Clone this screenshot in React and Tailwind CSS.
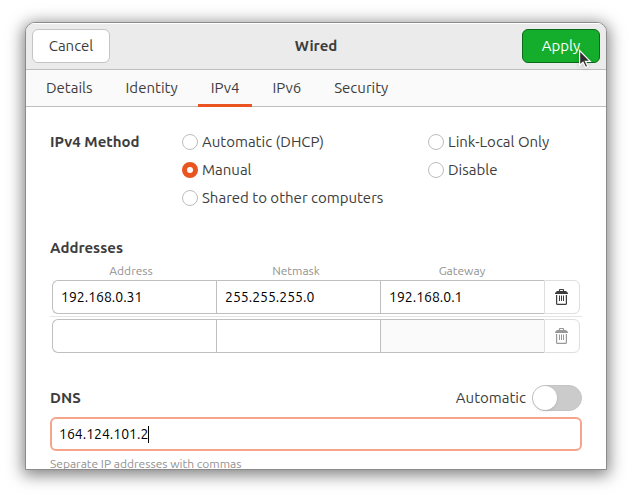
import React, { useState } from "react";

const tabs = ["Details", "Identity", "IPv4", "IPv6", "Security"];

const methods = [
  { id: "auto", label: "Automatic (DHCP)" },
  { id: "link-local", label: "Link-Local Only" },
  { id: "manual", label: "Manual" },
  { id: "disable", label: "Disable" },
  { id: "shared", label: "Shared to other computers" },
];

const emptyRow = { address: "", netmask: "", gateway: "" };

function TrashIcon() {
  return (
    <svg width="16" height="16" viewBox="0 0 16 16" fill="none" stroke="currentColor" aria-hidden="true">
      <path d="M5.5 2.5V1.2q0-.7.7-.7h2.6q.7 0 .7.7v1.3" strokeWidth="1.2" />
      <path d="M3 2h9l2 2v1H1V4z" fill="currentColor" stroke="none" />
      <path d="M2.6 6v8.4a1 1 0 0 0 1 1h7.8a1 1 0 0 0 1-1V6" strokeWidth="1.2" />
      <path d="M5.5 6.5V12M7.5 6.5V12M9.5 6.5V12" strokeWidth="1" />
    </svg>
  );
}

function Pointer() {
  return (
    <svg
      className="absolute left-14 top-5 pointer-events-none drop-shadow-sm"
      width="14"
      height="21"
      viewBox="0 0 14 21"
      aria-hidden="true"
    >
      <path
        d="M1.6 1.5v14.7l3.4-3 2.6 5.3 2.3-1.1-2.5-5.1h4.8z"
        fill="#2d2d2d"
        stroke="#fff"
        strokeWidth="1.2"
      />
    </svg>
  );
}

function AddressRow({ row, index, last, onChange, onRemove }) {
  const blank = !row.address && !row.netmask && !row.gateway;
  const field = "block w-full h-[34px] border-y border-l border-[#bfbfbf] px-2 text-sm text-black outline-none";
  const cell = last ? "pt-0.5" : "pb-0.5 border-b border-[#e4e4e4]";

  return (
    <tr>
      <td className={`${cell} pl-0.5`}>
        <input
          aria-label={`Address ${index + 1}`}
          value={row.address}
          onChange={(e) => onChange("address", e.target.value)}
          className={`${field} rounded-l-md bg-white`}
        />
      </td>
      <td className={cell}>
        <input
          aria-label={`Netmask ${index + 1}`}
          value={row.netmask}
          onChange={(e) => onChange("netmask", e.target.value)}
          className={`${field} bg-white`}
        />
      </td>
      <td className={cell}>
        <input
          aria-label={`Gateway ${index + 1}`}
          value={row.gateway}
          disabled={blank}
          onChange={(e) => onChange("gateway", e.target.value)}
          className={`${field} bg-white disabled:bg-[#fafafa]`}
        />
      </td>
      <td className={`${cell} pr-0.5`}>
        <button
          type="button"
          aria-label={`Remove address ${index + 1}`}
          disabled={blank}
          onClick={onRemove}
          className="flex items-center justify-center w-full h-[34px] rounded-r-md border border-[#dedede] bg-white text-[#3d3d3d] disabled:text-[#999]"
        >
          <TrashIcon />
        </button>
      </td>
    </tr>
  );
}

export default function App() {
  const [tab, setTab] = useState("IPv4");
  const [method, setMethod] = useState("manual");
  const [rows, setRows] = useState([
    { address: "192.168.0.31", netmask: "255.255.255.0", gateway: "192.168.0.1" },
    emptyRow,
  ]);
  const [autoDns, setAutoDns] = useState(false);
  const [dns, setDns] = useState("164.124.101.2");

  function updateRow(index, key, value) {
    setRows(rows.map((row, i) => (i === index ? { ...row, [key]: value } : row)));
  }

  return (
    <div className="h-screen bg-white px-[25px] pt-[22px] pb-7 font-[Ubuntu,'Noto_Sans',sans-serif] text-[15px] leading-5 text-[#3d3d3d]">
      <div
        role="dialog"
        aria-label="Wired"
        className="flex h-full flex-col overflow-hidden rounded-t-[10px] border border-[#8c8c8c] bg-white shadow-[0_3px_16px_2px_rgba(0,0,0,0.5)]"
      >
        <header className="flex shrink-0 items-center justify-between border-b border-[#bfbfbf] bg-[#ebebeb] p-1.5 shadow-[inset_0_1px_0_#fff]">
          <button type="button" className="h-[34px] w-[78px] rounded-md border border-[#c4c4c4] bg-white">
            Cancel
          </button>
          <h1 className="font-bold">Wired</h1>
          <div className="relative">
            <button type="button" className="block h-[34px] w-[78px] rounded-md border border-[#0b6b1a] bg-[#14ad2c] text-white">
              Apply
            </button>
            <Pointer />
          </div>
        </header>

        <nav role="tablist" className="flex shrink-0 gap-[7px] border-b border-[#bfbfbf] bg-[#fafafa] px-[7px]">
          {tabs.map((name) => (
            <button
              key={name}
              type="button"
              role="tab"
              aria-selected={tab === name}
              onClick={() => setTab(name)}
              className={`-mb-px h-[37px] border-b-3 px-[13px] pt-0.5 ${tab === name ? "border-[#e95420]" : "border-transparent"}`}
            >
              {name}
            </button>
          ))}
        </nav>

        <main className="min-h-0 flex-1 overflow-hidden px-6 pt-[21px]">
          <div role="radiogroup" aria-labelledby="method-label" className="grid grid-cols-[132px_1fr]">
            <h2 id="method-label" className="font-bold leading-7">IPv4 Method</h2>
            <div className="grid grid-cols-[246px_1fr]">
              {methods.map((m) => (
                <label key={m.id} className="flex h-7 items-center gap-1 whitespace-nowrap">
                  <input
                    type="radio"
                    name="method"
                    checked={method === m.id}
                    onChange={() => setMethod(m.id)}
                    className="size-4 shrink-0 appearance-none rounded-full border border-[#bdbdbd] bg-white checked:border-[5px] checked:border-[#e95420]"
                  />
                  {m.label}
                </label>
              ))}
            </div>
          </div>

          <h2 className="mt-[26px] font-bold">Addresses</h2>
          <table className="mt-1 w-full table-fixed border-separate border-spacing-0">
            <colgroup>
              <col />
              <col className="w-[164px]" />
              <col className="w-[164px]" />
              <col className="w-[38px]" />
            </colgroup>
            <thead>
              <tr className="text-xs leading-[18px] text-[#929292]">
                <th scope="col" className="pr-1 font-normal">Address</th>
                <th scope="col" className="pr-1 font-normal">Netmask</th>
                <th scope="col" className="font-normal">Gateway</th>
                <td />
              </tr>
            </thead>
            <tbody>
              {rows.map((row, i) => (
                <AddressRow
                  key={i}
                  row={row}
                  index={i}
                  last={i === rows.length - 1}
                  onChange={(key, value) => updateRow(i, key, value)}
                  onRemove={() => setRows(rows.filter((_, n) => n !== i))}
                />
              ))}
            </tbody>
          </table>

          <div className="mt-8 flex items-center justify-between">
            <h2 className="font-bold">
              <label htmlFor="dns">DNS</label>
            </h2>
            <label className="flex items-center gap-1.5">
              Automatic
              <input
                type="checkbox"
                role="switch"
                checked={autoDns}
                onChange={(e) => setAutoDns(e.target.checked)}
                className="h-[26px] w-[50px] appearance-none rounded-full border border-[#c4c4c4] bg-[#cbcbcb] before:block before:size-6 before:rounded-full before:bg-white before:shadow-sm checked:bg-[#e95420] checked:before:ml-6"
              />
            </label>
          </div>
          <div className="mt-1.5 flex h-[34px] items-center rounded-md border-2 border-[#f4a58c] bg-white px-[7px]">
            <input
              id="dns"
              value={dns}
              onChange={(e) => setDns(e.target.value)}
              aria-describedby="dns-hint"
              className="field-sizing-content text-sm text-black caret-transparent outline-none"
            />
            <span className="h-[17px] w-px bg-black" />
          </div>
          <p id="dns-hint" className="mt-1 text-xs leading-[18px] text-[#929292]">
            Separate IP addresses with commas
          </p>
        </main>
      </div>
    </div>
  );
}
